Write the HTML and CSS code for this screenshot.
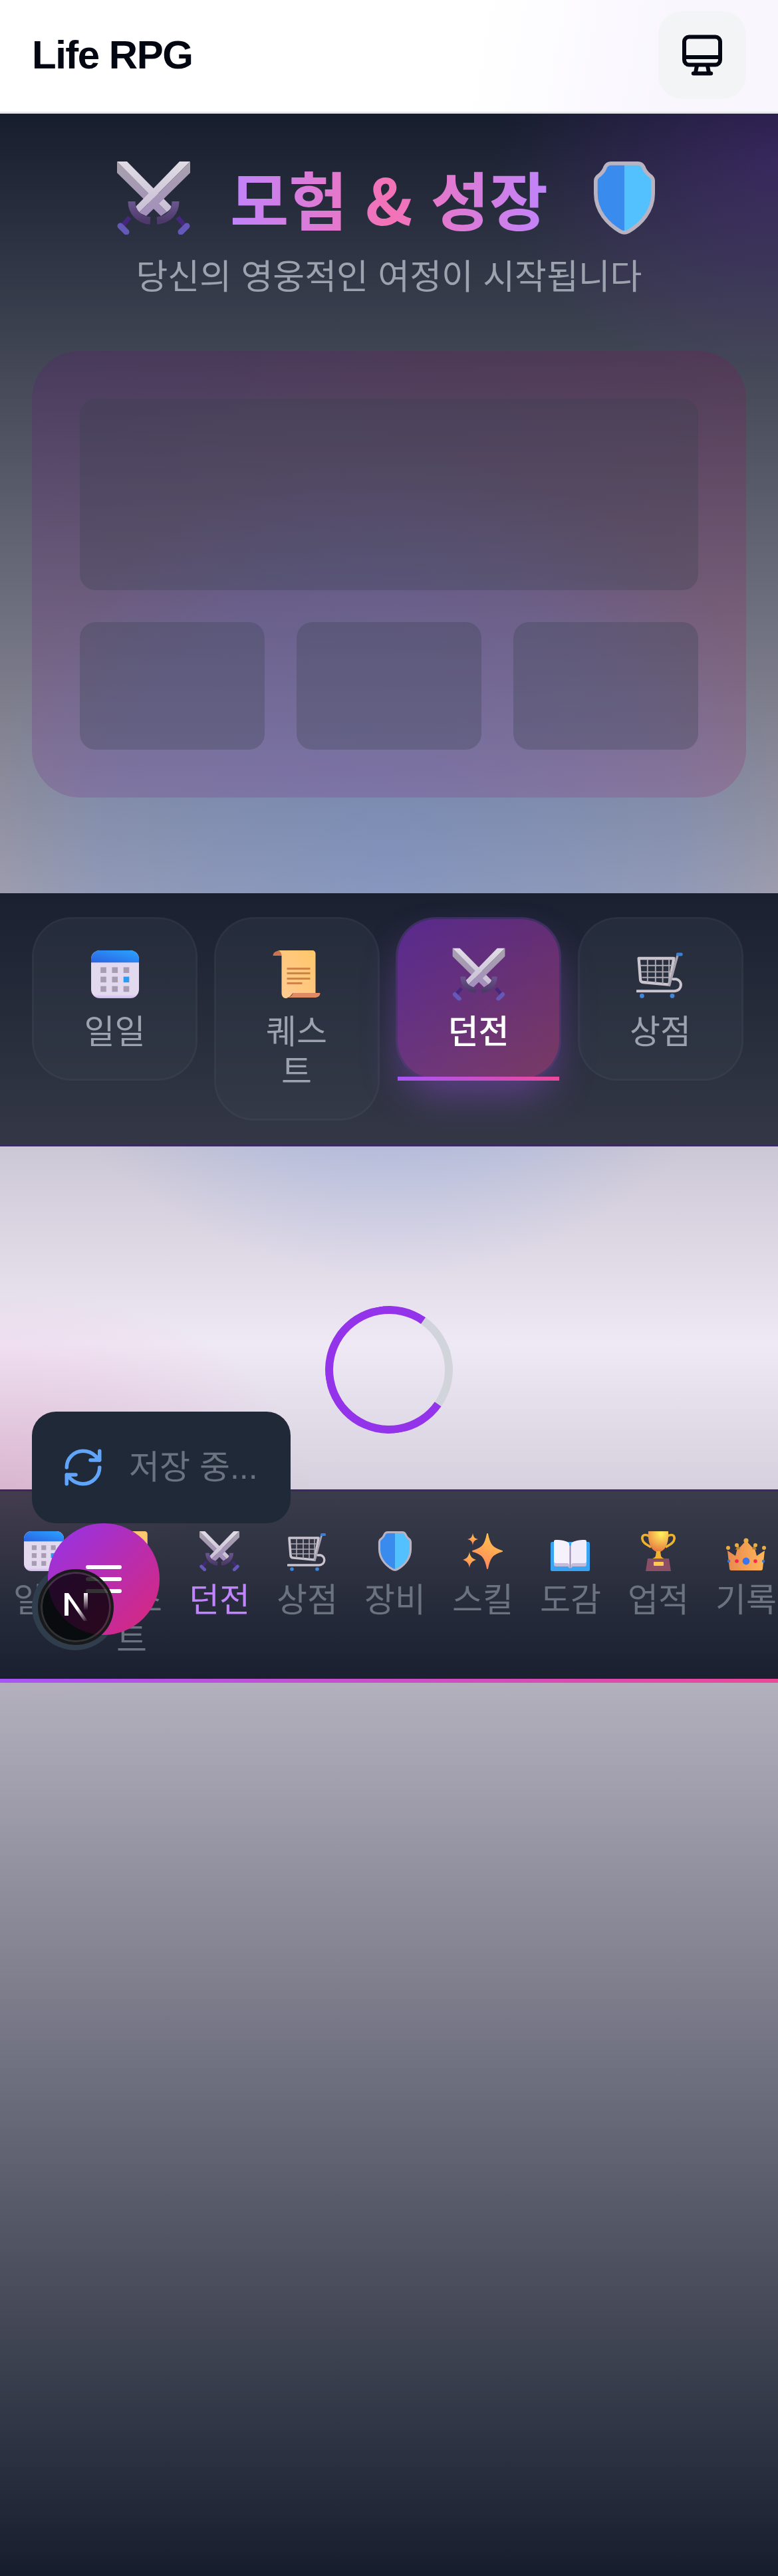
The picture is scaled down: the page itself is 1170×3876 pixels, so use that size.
FILE: index.html
```html
<!DOCTYPE html>
<html lang="ko">
<head>
<meta charset="utf-8">
<title>Life RPG</title>
<link rel="stylesheet" href="styles.css">
</head>
<body>
<svg class="defs" aria-hidden="true">
  <defs>
    <linearGradient id="g-sw-a" x1="0" y1="0" x2="0" y2="1"><stop offset="0" stop-color="#e0dce4"/><stop offset="1" stop-color="#c9bfd6"/></linearGradient>
    <linearGradient id="g-sw-b" x1="0" y1="0" x2="0" y2="1"><stop offset="0" stop-color="#a8a2ac"/><stop offset="1" stop-color="#a48fbd"/></linearGradient>
    <linearGradient id="g-sw-c" x1="0" y1="0" x2="0" y2="1"><stop offset="0" stop-color="#6b5690"/><stop offset="1" stop-color="#4e3a6a"/></linearGradient>
    <linearGradient id="g-sh" x1="0" y1="0" x2="1" y2="0"><stop offset=".5" stop-color="#3a8bee"/><stop offset=".5" stop-color="#54c1ff"/></linearGradient>
    <linearGradient id="g-cal" x1="0" y1="1" x2="1" y2="0"><stop offset="0" stop-color="#2a62e2"/><stop offset="1" stop-color="#2aa4ff"/></linearGradient>
    <linearGradient id="g-calb" x1="0" y1="0" x2="0" y2="1"><stop offset=".92" stop-color="#e3d9ee"/><stop offset="1" stop-color="#d2b6f2"/></linearGradient>
    <linearGradient id="g-sc" x1="1" y1="0" x2="0" y2="1"><stop offset="0" stop-color="#ffc66a"/><stop offset="1" stop-color="#ffcb94"/></linearGradient>
    <linearGradient id="g-sp" x1="0.7" y1="0" x2="0.3" y2="1"><stop offset="0" stop-color="#ffc64a"/><stop offset="1" stop-color="#ff855e"/></linearGradient>
    <radialGradient id="g-tr" cx=".65" cy=".12" r=".9"><stop offset="0" stop-color="#fff35e"/><stop offset="1" stop-color="#e8763f"/></radialGradient>
    <linearGradient id="g-cr" x1="0" y1="0" x2="1" y2="0"><stop offset="0" stop-color="#e88a4e"/><stop offset="1" stop-color="#ffb55a"/></linearGradient>
    <linearGradient id="g-n" x1="0" y1="0" x2="1" y2="1"><stop offset=".55" stop-color="#fff"/><stop offset="1" stop-color="#fff" stop-opacity="0"/></linearGradient>
    <linearGradient id="g-n2" x1="0" y1="0" x2="0" y2="1"><stop offset="0" stop-color="#fff"/><stop offset="1" stop-color="#fff" stop-opacity="0"/></linearGradient>

    <symbol id="i-swords" viewBox="0 0 110 110">
      <path d="M0 0 75 76 66 82 0 17Z" fill="url(#g-sw-b)"/>
      <path d="M0 0 15 0 83 69 75 76Z" fill="url(#g-sw-a)"/>
      <path d="M19 84 7 98M91 84 103 98" stroke="#46277e" stroke-width="7" fill="none"/>
      <path d="M5 97 14 106M105 97 96 106" stroke="#6558b8" stroke-width="9" stroke-linecap="round" fill="none"/>
      <path d="M110 0 94 0 27 69 33 77Z" fill="url(#g-sw-a)"/>
      <path d="M110 0 110 17 44 82 33 77Z" fill="url(#g-sw-b)"/>
      <path d="M22 60C22 76 33 88 50 89" stroke="url(#g-sw-c)" stroke-width="11" fill="none"/>
      <path d="M88 60C88 76 77 88 60 89" stroke="url(#g-sw-c)" stroke-width="11" fill="none"/>
    </symbol>

    <symbol id="i-shield" viewBox="-3 -3 97 116">
      <path d="M24 0H67C71 0 74 2 76 6 78 13 84 18 88 21 90 23 91 25 91 28V48C91 76 72 96 52 108 48 110 43 110 39 108 19 96 0 76 0 48V28C0 25 1 23 3 21 7 18 13 13 15 6 17 2 20 0 24 0Z" fill="url(#g-sh)" stroke="#b9b2c1" stroke-width="6"/>
    </symbol>

    <symbol id="i-cal" viewBox="0 0 71 71">
      <rect width="71" height="71" rx="13" fill="url(#g-calb)"/>
      <path d="M0 18V13C0 6 6 0 13 0H58C65 0 71 6 71 13V18Z" fill="url(#g-cal)"/>
      <g fill="#a89cb4">
        <rect x="14" y="25" width="8.5" height="8.5"/><rect x="31" y="25" width="8.5" height="8.5"/><rect x="48" y="25" width="8.5" height="8.5"/>
        <rect x="14" y="39" width="8.5" height="8.5"/><rect x="31" y="39" width="8.5" height="8.5"/>
        <rect x="14" y="53" width="8.5" height="8.5"/><rect x="31" y="53" width="8.5" height="8.5"/><rect x="48" y="53" width="8.5" height="8.5"/>
      </g>
      <rect x="48" y="39" width="8.5" height="8.5" fill="#2a9cf5"/>
    </symbol>

    <symbol id="i-scroll" viewBox="0 0 71 72">
      <path d="M13 0C5 0 0 3 0 8H14Z" fill="#c9744f"/>
      <path d="M8 0H59C62 0 64 2 64 5V64H30C26 70 22 72 19 72 15 72 13 68 13 64V8C13 4 11 1 8 0Z" fill="url(#g-sc)"/>
      <path d="M30 64H71C71 69 67 71 63 71H22C26 70 29 68 30 64Z" fill="#e08a66"/>
      <g fill="#d08347"><rect x="21" y="26" width="35" height="3"/><rect x="21" y="33" width="35" height="3"/><rect x="21" y="41" width="35" height="3"/><rect x="21" y="48" width="23" height="3"/></g>
    </symbol>

    <symbol id="i-cart" viewBox="0 0 60 60">
      <path d="M3 10H47L41 43 9 40C6 40 5 38 5 36Z" fill="none" stroke="#c9c4cd" stroke-width="3.6" stroke-linejoin="round"/>
      <path d="M5 19H45M6 27H44M7 34H42M14 11V40M24 11V41M33 11V42M41 11V43" stroke="#aeaab4" stroke-width="1.6" fill="none"/>
      <path d="M52 5 41 45" stroke="#a8a3ae" stroke-width="2.8" fill="none"/>
      <rect x="50" y="3" width="8" height="4" rx="1.5" fill="#3b80d8"/>
      <path d="M46 36H50C58 38 58 50 48 51H1" stroke="#c9c4cd" stroke-width="3.4" fill="none" stroke-linecap="round"/>
      <circle cx="7" cy="57" r="2.8" fill="#3f87dc"/><circle cx="45" cy="57" r="2.8" fill="#3f87dc"/>
    </symbol>

    <symbol id="i-spark" viewBox="0 0 60 60">
      <g fill="url(#g-sp)">
        <path d="M37 4C40 20 44 26 59 30 44 34 40 40 37 56 34 40 30 34 15 30 30 26 34 20 37 4Z" stroke="url(#g-sp)" stroke-width="2" stroke-linejoin="round"/>
        <path d="M15 3C16 9 18 11 23 12 18 13 16 15 15 21 14 15 12 13 7 12 12 11 14 9 15 3Z"/>
        <path d="M10 31C11 38 14 41 20 43 14 45 11 48 10 55 9 48 6 45 0 43 6 41 9 38 10 31Z"/>
      </g>
    </symbol>

    <symbol id="i-book" viewBox="0 0 60 60">
      <path d="M0 19C0 17 1 16 2 16H57C58 16 59 17 59 19V58C59 59 58 60 57 60H34L30 63 26 60H2C1 60 0 59 0 58Z" fill="#3ba4f2"/>
      <path d="M29 22C24 16 14 13 8 13 6 13 5 14 5 16V50C5 52 6 53 8 53H26L29 56Z" fill="#c4bcd8"/>
      <path d="M30 22C35 16 45 13 51 13 53 13 54 14 54 16V50C54 52 53 53 51 53H33L30 56Z" fill="#c4bcd8"/>
      <path d="M28 18C24 14 15 13 8 13 6 13 5 14 5 16V45C5 47 6 48 8 48H26L28 50Z" fill="#f5f2fc"/>
      <path d="M31 18C35 14 44 13 51 13 53 13 54 14 54 16V45C54 47 53 48 51 48H33L31 50Z" fill="#f0ecfa"/>
    </symbol>

    <symbol id="i-trophy" viewBox="0 0 60 60">
      <path d="M17 8C10 3 5 6 6 12 7 19 15 21 19 24M43 8C50 3 55 6 54 12 53 19 45 21 41 24" stroke="#efb22f" stroke-width="3.6" fill="none"/>
      <path d="M15 0H45C46 14 43 27 33 31H27C17 27 14 14 15 0Z" fill="url(#g-tr)"/>
      <path d="M27 30H33L34 37C35 40 37 40 39 41H21C23 40 25 40 26 37Z" fill="#f2b332"/>
      <path d="M14 41H46L49 60H11Z" fill="#8a4f64"/>
      <rect x="23" y="46" width="15" height="6" rx="1" fill="#ffc850"/>
    </symbol>

    <symbol id="i-crown" viewBox="0 0 60 60">
      <path d="M8 59C6 59 5 58 5 56L2 29 14 37 18 22 20 25 30 14 40 25 42 22 46 37 58 29 55 56C55 58 54 59 52 59Z" fill="url(#g-cr)"/>
      <path d="M18 20 14 28 21 27ZM42 20 46 28 39 27Z" fill="#b87d2a"/>
      <g fill="#e9ae42"><circle cx="3" cy="25" r="3"/><circle cx="16" cy="21" r="3"/><circle cx="30" cy="14" r="3.6"/><circle cx="44" cy="21" r="3"/><circle cx="57" cy="25" r="3"/></g>
      <circle cx="4" cy="45" r="2.2" fill="#3477d6"/><circle cx="56" cy="45" r="2.2" fill="#3477d6"/>
      <circle cx="16" cy="45" r="2.8" fill="#f5264f"/><circle cx="44" cy="45" r="2.8" fill="#f5264f"/>
      <circle cx="30" cy="45" r="5.4" fill="#3a74f0"/>
    </symbol>
  </defs>
</svg>

<header class="topbar">
  <h1 class="brand">Life RPG</h1>
  <button class="mode-btn" type="button" aria-label="테마">
    <svg class="mode-icon" viewBox="0 0 24 24"><rect x="3" y="2.8" width="18" height="14" rx="2.4"/><path d="M3 13H21M9.4 17 8.6 21M14.6 17 15.4 21M7.6 21.2H16.4"/></svg>
  </button>
</header>

<main class="stage">
  <section class="hero">
    <div class="hero-title">
      <svg class="hero-icon"><use href="#i-swords"/></svg>
      <h2 class="title-text">모험 &amp; 성장</h2>
      <svg class="hero-icon hero-shield"><use href="#i-shield"/></svg>
    </div>
    <p class="subtitle">당신의 영웅적인 여정이 시작됩니다</p>
    <div class="skeleton-card">
      <div class="sk sk-wide"></div>
      <div class="sk-row">
        <div class="sk sk-small"></div>
        <div class="sk sk-small"></div>
        <div class="sk sk-small"></div>
      </div>
    </div>
  </section>

  <nav class="tabs">
    <a class="tab"><svg class="tab-icon"><use href="#i-cal"/></svg><span class="tab-label">일일</span></a>
    <a class="tab"><svg class="tab-icon"><use href="#i-scroll"/></svg><span class="tab-label">퀘스트</span></a>
    <a class="tab tab-active"><svg class="tab-icon tab-icon-big"><use href="#i-swords"/></svg><span class="tab-label">던전</span></a>
    <a class="tab"><svg class="tab-icon"><use href="#i-cart"/></svg><span class="tab-label">상점</span></a>
  </nav>

  <section class="loading">
    <div class="spinner"></div>
  </section>

  <nav class="strip">
    <a class="strip-item"><svg class="strip-icon"><use href="#i-cal"/></svg><span class="strip-label">일일</span></a>
    <a class="strip-item"><svg class="strip-icon"><use href="#i-scroll"/></svg><span class="strip-label">퀘스트</span></a>
    <a class="strip-item strip-active"><svg class="strip-icon"><use href="#i-swords"/></svg><span class="strip-label">던전</span></a>
    <a class="strip-item"><svg class="strip-icon"><use href="#i-cart"/></svg><span class="strip-label">상점</span></a>
    <a class="strip-item"><svg class="strip-icon"><use href="#i-shield"/></svg><span class="strip-label">장비</span></a>
    <a class="strip-item"><svg class="strip-icon"><use href="#i-spark"/></svg><span class="strip-label">스킬</span></a>
    <a class="strip-item"><svg class="strip-icon"><use href="#i-book"/></svg><span class="strip-label">도감</span></a>
    <a class="strip-item"><svg class="strip-icon"><use href="#i-trophy"/></svg><span class="strip-label">업적</span></a>
    <a class="strip-item"><svg class="strip-icon"><use href="#i-crown"/></svg><span class="strip-label">기록</span></a>
  </nav>
  <div class="strip-bar"></div>
  <div class="tail"></div>
</main>

<div class="toast">
  <svg class="toast-icon" viewBox="0 0 24 24"><path d="M3 12a9 9 0 0 1 9-9 9.75 9.75 0 0 1 6.74 2.74L21 8M21 3v5h-5M21 12a9 9 0 0 1-9 9 9.75 9.75 0 0 1-6.74-2.74L3 16M8 16H3v5"/></svg>
  <span class="toast-text">저장 중...</span>
</div>
<div class="dev-halo"></div>
<button class="fab" type="button" aria-label="메뉴"><span class="fab-line"></span><span class="fab-line"></span><span class="fab-line"></span></button>
<div class="dev-badge">
  <svg class="dev-n" viewBox="0 0 35 42">
    <rect x="0" y="0" width="6" height="34" fill="#fff"/>
    <path d="M0 0H6L35 42H29Z" fill="url(#g-n)"/>
    <rect x="29" y="0" width="6" height="26" fill="url(#g-n2)"/>
  </svg>
</div>
</body>
</html>
```

FILE: styles.css
```css
* { box-sizing: border-box; }

html, body { margin: 0; padding: 0; }

body {
  position: relative;
  width: 1170px;
  overflow-x: hidden;
  font-family: "Liberation Sans", "Noto Sans CJK KR", sans-serif;
  background: #fff;
}

.defs { position: absolute; width: 0; height: 0; }

.topbar {
  height: 171px;
  display: flex;
  align-items: center;
  justify-content: space-between;
  padding: 0 48px 3px 48px;
  border-bottom: 3px solid #e5e7eb;
  background: linear-gradient(100deg, #fff 60%, #f9f6fe 85%);
}

.brand {
  margin: 0;
  font-size: 60px;
  line-height: 72px;
  font-weight: 700;
  letter-spacing: -1.5px;
  color: #030712;
}

.mode-btn {
  width: 132px;
  height: 132px;
  padding: 0;
  border: 0;
  border-radius: 36px;
  background: #f3f4f6;
  display: flex;
  align-items: center;
  justify-content: center;
}

.mode-icon {
  width: 72px;
  height: 72px;
  fill: none;
  stroke: #030712;
  stroke-width: 2;
  stroke-linecap: round;
  stroke-linejoin: round;
}

.stage {
  background:
    radial-gradient(ellipse 430px 330px at 1170px 70px, rgba(147, 51, 234, .22), rgba(147, 51, 234, .08) 65%, rgba(147, 51, 234, 0)),
    radial-gradient(circle 620px at 585px 1130px, rgba(59, 130, 246, .25), rgba(59, 130, 246, .15) 70%, rgba(59, 130, 246, 0)),
    radial-gradient(ellipse 470px 310px at 0 2080px, rgba(236, 72, 153, .2), rgba(236, 72, 153, 0)),
    linear-gradient(180deg, #161d2d 0, #efe8f5 50%, #161d2d 100%);
}

.hero { padding: 72px 48px 144px; }

.hero-title {
  display: flex;
  align-items: center;
  justify-content: center;
  gap: 60px;
  height: 110px;
}

.hero-icon { width: 110px; height: 110px; flex: none; }

.title-text {
  margin: 0;
  font-family: "Noto Sans CJK KR", "Liberation Sans", sans-serif;
  font-size: 96px;
  line-height: 110px;
  font-weight: 700;
  white-space: nowrap;
  background: linear-gradient(90deg, #c084fc, #f472b6 50%, #c084fc);
  -webkit-background-clip: text;
  background-clip: text;
  color: transparent;
}

.subtitle {
  margin: 28px 0 0;
  font-size: 52px;
  line-height: 72px;
  text-align: center;
  color: #9ca3af;
}

.skeleton-card {
  margin-top: 75px;
  height: 672px;
  padding: 72px;
  border-radius: 72px;
  background: linear-gradient(90deg, rgba(110, 0, 128, .16), rgba(157, 0, 88, .16));
}

.sk { background: rgba(55, 65, 81, .3); border-radius: 24px; }
.sk-wide { height: 288px; }
.sk-row {
  margin-top: 48px;
  display: grid;
  grid-template-columns: repeat(3, 1fr);
  gap: 48px;
}
.sk-small { height: 192px; }

.tabs {
  display: grid;
  grid-template-columns: repeat(4, 249px);
  column-gap: 24.5px;
  align-items: start;
  padding: 36px 48px;
  border-bottom: 3px solid #3b2a5f;
  background: linear-gradient(180deg, #1a2030, #343846);
}

.tab {
  position: relative;
  display: flex;
  flex-direction: column;
  align-items: center;
  padding: 47px 60px 40px;
  border: 3px solid rgba(75, 85, 99, .3);
  border-radius: 60px;
  background: rgba(55, 65, 81, .3);
  background-clip: padding-box;
}

.tab-icon { width: 72px; height: 72px; flex: none; display: block; overflow: visible; }
.tab-icon-big { transform: scale(1.1); }

.tab-label {
  margin-top: 21px;
  font-size: 50px;
  line-height: 60px;
  text-align: center;
  color: #9ca3af;
}

.tab-active {
  border-color: rgba(168, 85, 247, .25);
  background: linear-gradient(135deg, rgba(147, 51, 234, .5), rgba(236, 72, 153, .4));
  background-clip: padding-box;
  box-shadow: 0 30px 60px -10px rgba(168, 85, 247, .4);
}

.tab-active .tab-label { color: #fff; font-weight: 500; }

.tab-active::after {
  content: "";
  position: absolute;
  left: 0;
  right: 0;
  bottom: -3px;
  height: 6px;
  background: linear-gradient(90deg, #a855f7, #ec4899);
}

.loading {
  height: 516px;
  padding-top: 240px;
  display: flex;
  justify-content: center;
  align-items: flex-start;
}

.spinner {
  width: 192px;
  height: 192px;
  border: 12px solid #9333ea;
  border-right-color: #d1d5db;
  border-radius: 50%;
  transform: rotate(-10deg);
}

.strip {
  display: flex;
  gap: 24px;
  height: 285px;
  padding: 60px 0 0 12px;
  overflow: hidden;
  border-top: 3px solid #3b2a5f;
  background:
    radial-gradient(ellipse 340px 150px at 0 0, rgba(236, 72, 153, .05), rgba(236, 72, 153, 0)),
    linear-gradient(180deg, #3a3c4b, #1a2030);
}

.strip-item {
  flex: none;
  width: 108px;
  display: flex;
  flex-direction: column;
  align-items: center;
}

.strip-icon { width: 60px; height: 60px; flex: none; display: block; overflow: visible; }

.strip-label {
  margin-top: 14px;
  width: 108px;
  font-size: 50px;
  line-height: 60px;
  text-align: center;
  color: #6b7280;
}

.strip-active .strip-label { color: #c084fc; }

.strip-bar { height: 6px; background: linear-gradient(90deg, #a855f7, #ec4899); }

.tail { height: 1344px; }

.toast {
  position: absolute;
  left: 48px;
  top: 2124px;
  width: 389px;
  height: 168px;
  padding-left: 44px;
  display: flex;
  align-items: center;
  gap: 36px;
  border-radius: 36px;
  background: #1f2937;
}

.toast-icon {
  width: 66px;
  height: 66px;
  flex: none;
  fill: none;
  stroke: #60a5fa;
  stroke-width: 2;
  stroke-linecap: round;
  stroke-linejoin: round;
}

.toast-text { font-size: 50px; line-height: 72px; color: #6b7280; white-space: nowrap; }

.dev-halo {
  position: absolute;
  left: 48px;
  top: 2353px;
  width: 130px;
  height: 130px;
  border-radius: 50%;
  background: #2f3d4c;
}

.fab {
  position: absolute;
  left: 72px;
  top: 2292px;
  width: 168px;
  height: 168px;
  padding: 0;
  border: 0;
  border-radius: 50%;
  background: linear-gradient(135deg, #9333ea, #db2777);
  display: flex;
  flex-direction: column;
  align-items: center;
  justify-content: center;
  gap: 12px;
}

.fab-line { width: 54px; height: 6px; border-radius: 3px; background: #fff; }

.dev-badge {
  position: absolute;
  left: 57px;
  top: 2361px;
  width: 114px;
  height: 114px;
  display: flex;
  align-items: center;
  justify-content: center;
  border-radius: 50%;
  border: 4px solid #191919;
  background: rgba(0, 0, 0, .8);
  box-shadow: inset 0 0 0 3px rgba(255, 255, 255, .16);
}

.dev-n { width: 35px; height: 42px; }
```
